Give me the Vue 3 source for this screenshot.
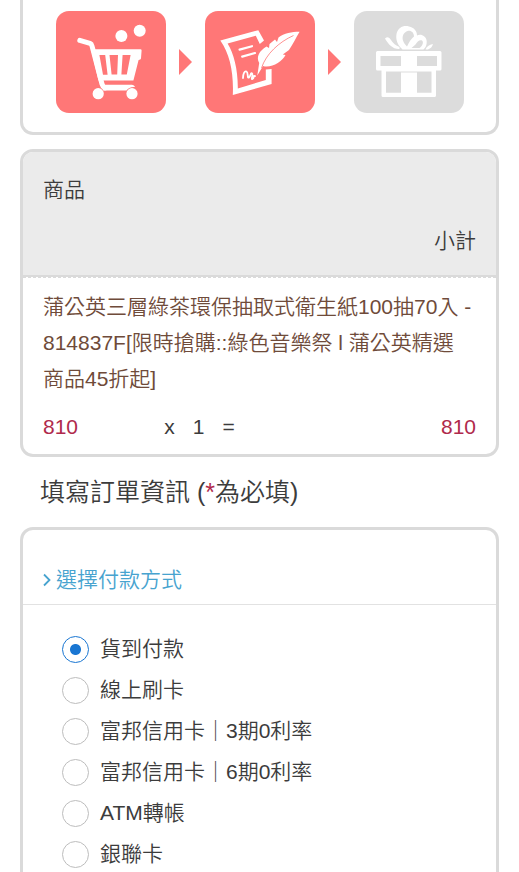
<script setup>
import { ref } from 'vue'

const product = {
  name: '蒲公英三層綠茶環保抽取式衛生紙100抽70入 - 814837F[限時搶購::綠色音樂祭 l 蒲公英精選商品45折起]',
  price: 810,
  quantity: 1,
}

const payments = [
  { id: 'cod', label: '貨到付款' },
  { id: 'card', label: '線上刷卡' },
  { id: 'fubon3', label: '富邦信用卡｜3期0利率' },
  { id: 'fubon6', label: '富邦信用卡｜6期0利率' },
  { id: 'atm', label: 'ATM轉帳' },
  { id: 'unionpay', label: '銀聯卡' },
]

const selected = ref('cod')
</script>

<template>
  <main class="page">
    <section class="panel steps">
      <svg class="tile active" viewBox="0 0 110 102" aria-hidden="true">
        <g fill="#fff">
          <circle cx="65.4" cy="25" r="6" />
          <circle cx="83.7" cy="19.7" r="6" />
          <path fill-rule="evenodd" d="M35 38.2H84.5Q85.6 38.2 85.6 39.5L85 47.6Q84.8 48.8 82.6 49L77.4 69.6H42.5ZM43.4 44 47 63.8H51.6L49.2 44ZM53.5 44 55.6 63.4H61.2L62 44ZM66.6 44 65.4 63.4H70.8L74.6 44Z" />
          <path d="M46 73.8H76Q78.500 74 79 76Q73 75.500 70.500 79.600H47Z" />
          <circle cx="42.200" cy="82.700" r="5.600" />
          <circle cx="76" cy="82.700" r="5.600" />
        </g>
        <path d="M23.800 29.400 34 32.400Q35.500 33 36 35L46 73Q46.800 76 49 77" fill="none" stroke="#fff" stroke-width="5" stroke-linecap="round" stroke-linejoin="round" />
      </svg>
      <span class="arrow"></span>
      <svg class="tile active" viewBox="0 0 110 102" aria-hidden="true">
        <path fill="#fff" fill-rule="evenodd" d="M15.300 29.500 53.300 19.200 59 29.500 54.800 33 50.800 24.800 22.600 32.600C29 43 33 59 32.800 77.600L60.800 69V58.600L66.600 58V73L27.800 84C28.800 62 25 43 15.300 29.500Z" />
        <g fill="none" stroke="#fff" stroke-linecap="round" stroke-linejoin="round">
          <path stroke-width="2.200" d="M34.600 38.600 47 35.200M37.200 45.600 50 42" />
          <path stroke-width="1.800" d="M38 67C38 63 39.500 59.500 41.500 60.500S42 68 44 66.500 45.500 61 47 62.500 45.500 69 47.500 68 48 64 50 65" />
        </g>
        <path fill="#fff" d="M94.600 20.800C88 20.700 79 22 73.500 26.500L72 31 70 28.500 64.500 33 64 37 61.500 35.500C54 40 51 46 54.200 52L52.300 64.500 58 55C66 57.500 77 51 80.500 44L77.800 43.500 84 39C88 33 91 27 94.600 20.800Z" />
        <path fill="none" stroke="#ff7777" stroke-width=".8" d="M88.500 24.500C74 31 61 43 56.500 57" />
      </svg>
      <span class="arrow"></span>
      <svg class="tile" viewBox="0 0 110 102" aria-hidden="true">
        <path fill="#fff" fill-rule="evenodd" d="M23.500 40H86Q87.500 40 87.500 41.500V58Q87.500 59.500 86 59.500H82V84.500Q82 86 80.500 86H29Q27.500 86 27.500 84.500V59.500H23.500Q22 59.500 22 58V41.500Q22 40 23.500 40ZM26.500 45V55H47V45ZM63 45V55H83V45ZM32 60.500V81.700H47V61.500H63V81.700H77.500V60.500Z" />
        <path fill="#fff" d="M31 27.500Q34.500 24.500 37 29 40 34 45.500 36V38C39 38.500 34 33 31 27.500ZM71.500 38.500Q73 34 79 33Q78 37 74 38.500Z" />
        <path fill="#fff" fill-rule="evenodd" d="M48.500 38.500C43.500 34 41.500 29 42.500 23 44 16 50 14 55 15.500 60 16.500 63 20 63 24.500 67 22.500 72 25 72.700 30 73 34 71.500 37 69.500 38.500ZM53 35.500C55 31 57 28 60 25.500 60 21.500 57 19 53.500 20 49 21.500 48 26 49 29.500 50 32.500 51.500 34 53 35.500ZM57.500 37H65.500C68.500 35 70 31 68 29.500 65.500 28.500 63 31 61.500 33.500Z" />
      </svg>
    </section>

    <section class="panel order">
      <table class="cart">
        <thead>
          <tr class="cart-head">
            <th scope="col">商品</th>
            <th scope="col" class="end">小計</th>
          </tr>
        </thead>
        <tbody>
          <tr class="cart-row">
            <td class="name">{{ product.name }}</td>
            <td class="money">{{ product.price }}</td>
            <td class="quantity"><span>x</span><span>{{ product.quantity }}</span><span>=</span></td>
            <td class="money end">{{ product.price * product.quantity }}</td>
          </tr>
        </tbody>
      </table>
    </section>

    <h1 class="title">填寫訂單資訊 (<span class="star">*</span>為必填)</h1>

    <section class="panel payment">
      <h2 class="payment-title">
        <svg class="chevron" viewBox="0 0 8 14" aria-hidden="true"><path d="M1 1.500 6.500 7 1 12.500" /></svg>
        選擇付款方式
      </h2>
      <div class="options" role="radiogroup" aria-label="選擇付款方式">
        <label v-for="item in payments" :key="item.id" class="option">
          <input v-model="selected" type="radio" name="payment" :value="item.id" />
          <span>{{ item.label }}</span>
        </label>
      </div>
    </section>
  </main>
</template>

<style>
body {
  margin: 0;
  background: #fff;
}
</style>

<style scoped>
.page {
  box-sizing: border-box;
  display: flex;
  flex-direction: column;
  min-height: 100vh;
  padding: 0 20px;
  color: #3c3c3c;
  font: 350 21px/36px "Liberation Sans", "Noto Sans CJK TC", sans-serif;
}
.panel {
  border: 3px solid #dadada;
  border-radius: 13px;
  background: #fff;
}
.steps {
  display: flex;
  align-items: center;
  justify-content: center;
  gap: 13px;
  padding: 11px 0 19px;
  border-top: 0;
  border-radius: 0 0 13px 13px;
}
.tile {
  width: 110px;
  height: 102px;
  border-radius: 13px;
  background: #dcdcdc;
}
.tile.active {
  background: #ff7777;
}
.arrow {
  border: solid transparent;
  border-width: 13px 0 13px 13px;
  border-left-color: #ff7777;
}
.order {
  margin-top: 14px;
  overflow: hidden;
}
.cart,
.cart thead,
.cart tbody {
  display: block;
}
.cart-head {
  display: flex;
  flex-direction: column;
  gap: 15px;
  padding: 20px 20px 16px;
  border-bottom: 2px solid #dadada;
  background: #ebebeb;
}
.cart th,
.cart td {
  padding: 0;
  font-weight: inherit;
  text-align: left;
}
.cart .end {
  text-align: right;
}
.cart-row {
  display: grid;
  grid-template-columns: 28% auto 1fr;
  row-gap: 12px;
  padding: 11px 20px 9px;
  border-top: 1px dashed #dadada;
}
.cart .name {
  grid-column: 1 / -1;
  padding-right: 3px;
  color: #6f4b3a;
}
.cart .money {
  color: #b02a4c;
}
.quantity {
  display: flex;
  gap: 18px;
}
.title {
  margin: 17px 0;
  padding: 0 20px;
  font-size: 25px;
  font-weight: inherit;
}
.star {
  color: #b02a4c;
}
.payment {
  flex: 1;
  border-bottom: 0;
  border-radius: 13px 13px 0 0;
}
.payment-title {
  display: flex;
  align-items: center;
  gap: 5px;
  margin: 0;
  padding: 32px 20px 6px;
  border-bottom: 1px solid #e2e2e2;
  color: #47a3cf;
  font-size: 21px;
  font-weight: inherit;
}
.chevron {
  width: 8px;
  height: 14px;
  fill: none;
  stroke: currentColor;
  stroke-width: 1.8;
}
.options {
  display: flex;
  flex-direction: column;
  align-items: flex-start;
  gap: 9px;
  padding: 28px 20px 0 39px;
}
.option {
  display: flex;
  align-items: center;
  gap: 11px;
  line-height: 32px;
  cursor: pointer;
}
.option input {
  box-sizing: border-box;
  flex: none;
  appearance: none;
  width: 27px;
  height: 27px;
  margin: 0;
  border: 1px solid #bdbdbd;
  border-radius: 50%;
  background: #fff;
}
.option input:checked {
  border-color: #1976d2;
  background: radial-gradient(circle, #1976d2 5px, transparent 6px);
}
</style>
